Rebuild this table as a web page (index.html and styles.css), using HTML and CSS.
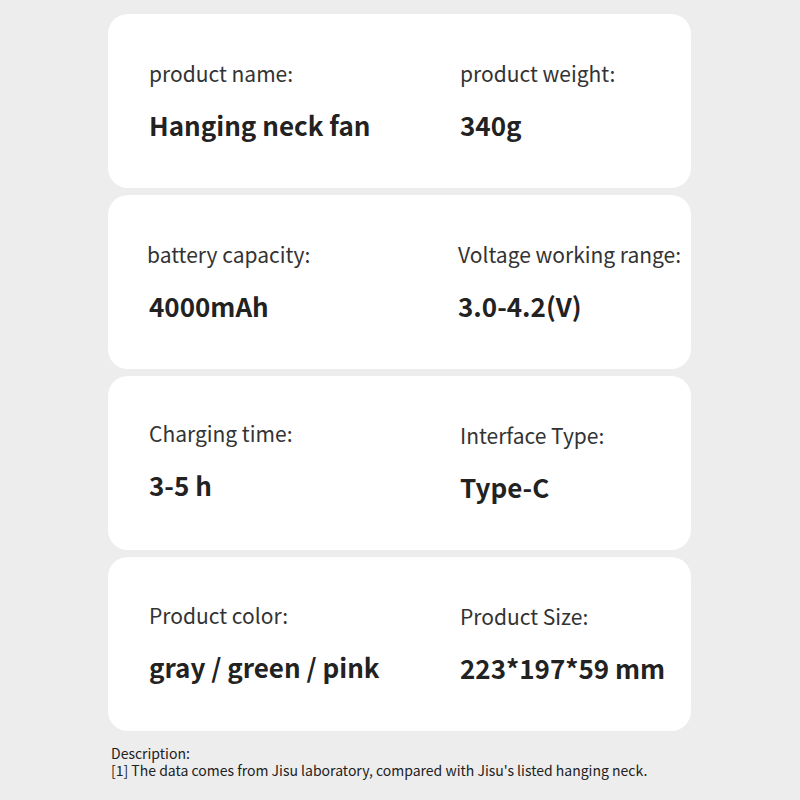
FILE: index.html
```html
<!DOCTYPE html>
<html>
<head>
<meta charset="utf-8">
<link rel="stylesheet" href="styles.css">
</head>
<body>
<main class="page">
  <section class="card">
    <div class="cell"><div class="label">product name:</div><div class="value">Hanging neck fan</div></div>
    <div class="cell"><div class="label">product weight:</div><div class="value">340g</div></div>
  </section>
  <section class="card card-left">
    <div class="cell"><div class="label">battery capacity:</div><div class="value val-right">4000mAh</div></div>
    <div class="cell"><div class="label">Voltage working range:</div><div class="value">3.0-4.2(V)</div></div>
  </section>
  <section class="card">
    <div class="cell up-2"><div class="label">Charging time:</div><div class="value">3-5 h</div></div>
    <div class="cell"><div class="label">Interface Type:</div><div class="value">Type-C</div></div>
  </section>
  <section class="card">
    <div class="cell up-1"><div class="label">Product color:</div><div class="value">gray / green / pink</div></div>
    <div class="cell"><div class="label">Product Size:</div><div class="value">223*197*59 mm</div></div>
  </section>
  <footer class="desc">
    <div class="desc-line">Description:</div>
    <div class="desc-line">[1] The data comes from Jisu laboratory, compared with Jisu's listed hanging neck.</div>
  </footer>
</main>
</body>
</html>
```
FILE: styles.css
```css
html, body {
  margin: 0;
  padding: 0;
  background: #ededed;
}
body {
  width: 800px;
  height: 800px;
  overflow: hidden;
  font-family: "Noto Sans CJK SC", "Noto Sans", sans-serif;
  color: #222;
}
.page {
  padding: 14px 109px 0 108px;
  display: flex;
  flex-direction: column;
  gap: 7px;
}
.card {
  background: #fff;
  border-radius: 20px;
  height: 174px;
  box-sizing: border-box;
  padding: 46px 0 0 41px;
  display: grid;
  grid-template-columns: 311px 1fr;
  align-content: start;
}
.card-left {
  padding-left: 39px;
}
.val-right {
  margin-left: 2px;
}
.cell {
  display: flex;
  flex-direction: column;
  white-space: nowrap;
}
.up-1 {
  margin-top: -1px;
}
.up-2 {
  margin-top: -2px;
}
.label {
  font-size: 21px;
  line-height: 26px;
  color: #333;
  font-weight: 400;
}
.value {
  margin-top: 23px;
  font-size: 26px;
  line-height: 32px;
  font-weight: 700;
  color: #222;
}
.desc {
  margin-top: 7px;
  padding-left: 3px;
  font-size: 14px;
  line-height: 17px;
  color: #222;
  white-space: nowrap;
}
.desc-line {
  height: 17px;
}
```
